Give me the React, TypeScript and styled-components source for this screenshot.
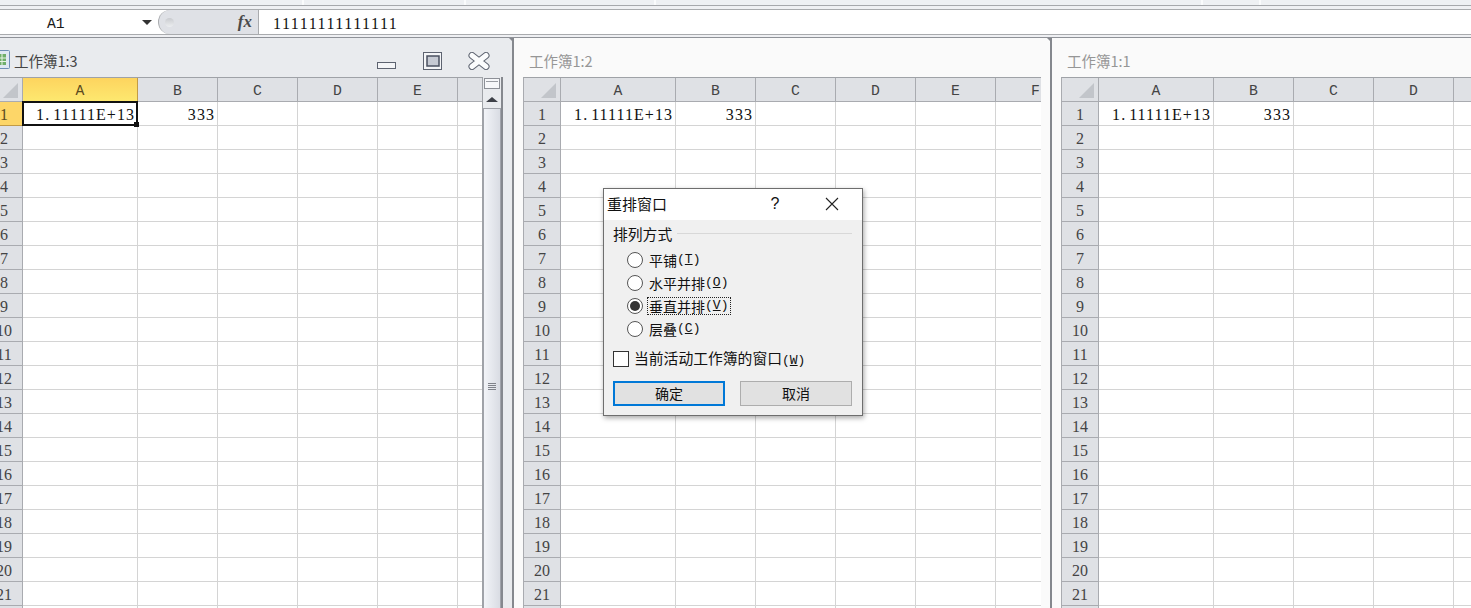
import React from "react";
import styled, { createGlobalStyle } from "styled-components";

const Global = createGlobalStyle`
  html, body { margin: 0; padding: 0; background: #fff; overflow: hidden; }
  * { box-sizing: border-box; }
`;

const CJK = `"Noto Sans CJK SC", "Liberation Sans", sans-serif`;
const MONO = `"Liberation Mono", "Noto Sans CJK SC", monospace`;
const SERIF = `"Liberation Serif", "Noto Sans CJK SC", serif`;

const Page = styled.div`
  position: relative;
  width: 1471px;
  height: 608px;
  overflow: hidden;
  display: flex;
  flex-direction: column;
  background: #eff0f3;
`;

const RibbonEdge = styled.div`
  display: flex;
  flex: none;
  height: 6px;
  background: #eef0f3;
  border-bottom: 1px solid #a6a8ac;
`;

const RibbonGroup = styled.div<{ $w: number }>`
  flex: none;
  width: ${(p) => p.$w}px;
  border-right: 2px solid #fafbfc;
`;

const RibbonGap = styled.div`
  flex: none;
  height: 3px;
  background: #eff0f3;
`;

const FormulaBar = styled.div`
  flex: none;
  display: flex;
  height: 26px;
  background: #fff;
  border-top: 1px solid #a9abae;
  border-bottom: 1px solid #a9abae;
`;

const NameBox = styled.div`
  flex: none;
  width: 158px;
  display: flex;
  align-items: center;
  padding: 3px 0 0 47px;
  font: 14.75px ${MONO};
  color: #1a1a1a;
`;

const NameArrow = styled.span`
  margin: -3px 0 0 77px;
  width: 0;
  height: 0;
  border-left: 5px solid transparent;
  border-right: 5px solid transparent;
  border-top: 5px solid #333;
`;

const FxPill = styled.div`
  flex: none;
  width: 101px;
  display: flex;
  align-items: center;
  justify-content: space-between;
  padding: 0 6px 0 6px;
  background: #dfe1e6;
  border-left: 1px solid #a9abae;
  border-right: 1px solid #a9abae;
  border-radius: 12px 0 0 12px;
`;

const PillDot = styled.span`
  width: 9px;
  height: 9px;
  border-radius: 50%;
  background: linear-gradient(#c9cbcf, #eceef0);
`;

const FxLabel = styled.span`
  font: italic bold 17px "Liberation Serif", serif;
  color: #4a4a4a;
`;

const FormulaText = styled.div`
  padding: 2px 0 0 14px;
  font: 16px/24px ${SERIF};
  letter-spacing: 1.5px;
  color: #111;
`;

const FrameGap = styled.div`
  flex: none;
  height: 3px;
  background: #eff0f3;
  border-bottom: 1px solid #8f9298;
`;

const Desktop = styled.div`
  flex: 1;
  display: flex;
  min-height: 0;
  margin-left: -25px;
`;

const Win = styled.section<{ $w?: number; $active?: boolean; $pad: number; $last?: boolean }>`
  position: relative;
  flex: ${(p) => (p.$w ? `none` : `1`)};
  width: ${(p) => (p.$w ? `${p.$w}px` : `auto`)};
  padding-left: ${(p) => p.$pad}px;
  display: flex;
  flex-direction: column;
  min-height: 0;
  background: ${(p) => (p.$active ? "#e9ebee" : "#fafafa")};
  border-right: ${(p) => (p.$last ? "0" : "2px solid #85888e")};

  &::after {
    content: "";
    display: ${(p) => (p.$last ? "none" : "block")};
    position: absolute;
    top: 0;
    right: -5px;
    width: 0;
    height: 0;
    border-left: 4px solid transparent;
    border-right: 4px solid transparent;
    border-top: 4px solid #85888e;
  }
`;

const TitleBar = styled.header<{ $active?: boolean }>`
  position: relative;
  flex: none;
  height: 39px;
  display: flex;
  align-items: center;
  padding: 5px 0 0 ${(p) => (p.$active ? "12px" : "6px")};
  gap: 4px;
  font: 14.5px ${CJK};
  color: ${(p) => (p.$active ? "#444" : "#969696")};
`;

const TitleButtons = styled.div`
  position: absolute;
  top: 14px;
  left: 392px;
  display: flex;
  gap: 26px;
  align-items: flex-end;
`;

const CloseGlyph = styled.svg`
  margin-left: -1px;
`;

const Body = styled.div`
  flex: 1;
  display: flex;
  min-height: 0;
`;

const Sheet = styled.div<{ $w?: number; $cols: number }>`
  flex: ${(p) => (p.$w ? "none" : "1")};
  width: ${(p) => (p.$w ? `${p.$w}px` : "auto")};
  height: 532px;
  overflow: hidden;
  display: grid;
  align-content: start;
  grid-template-columns: 37px 115px repeat(${(p) => p.$cols}, 80px);
  grid-auto-rows: 24px;
  background: #fff;
  border-left: 1px solid #a9abb0;
  border-top: 1px solid #9fa2a7;
  font: 16px ${SERIF};
  color: #111;
`;

const ColHead = styled.div<{ $on?: boolean }>`
  display: flex;
  align-items: center;
  justify-content: center;
  overflow: hidden;
  padding-top: 3px;
  font: 14.75px ${MONO};
  background: ${(p) => (p.$on ? "linear-gradient(#fdd45f, #fde86f)" : "#dfe1e5")};
  border-right: 1px solid ${(p) => (p.$on ? "#c29b46" : "#a9abb0")};
  border-bottom: 1px solid ${(p) => (p.$on ? "#c29b46" : "#a9abb0")};
  color: ${(p) => (p.$on ? "#5a4a20" : "#444")};
`;

const Corner = styled.div`
  display: flex;
  align-items: flex-end;
  justify-content: flex-end;
  padding: 0 4px 3px 0;
  background: #dfe1e5;
  border-right: 1px solid #a9abb0;
  border-bottom: 1px solid #a9abb0;
`;

const CornerMark = styled.span`
  width: 0;
  height: 0;
  border-left: 15px solid transparent;
  border-bottom: 15px solid #c2c5ca;
`;

const RowHead = styled.div<{ $on?: boolean }>`
  display: flex;
  align-items: center;
  justify-content: center;
  padding-top: 3px;
  background: ${(p) => (p.$on ? "#fdd668" : "#dfe1e5")};
  border-right: 1px solid ${(p) => (p.$on ? "#c29b46" : "#a9abb0")};
  border-bottom: 1px solid ${(p) => (p.$on ? "#c29b46" : "#a9abb0")};
  color: ${(p) => (p.$on ? "#5a4a20" : "#444")};
`;

const Cell = styled.div<{ $sel?: boolean }>`
  position: relative;
  display: flex;
  align-items: center;
  justify-content: flex-end;
  padding: 3px 2px 0 0;
  letter-spacing: 1.05px;
  border-right: 1px solid #d4d4d4;
  border-bottom: 1px solid #d4d4d4;
  white-space: nowrap;

  ${(p) =>
    p.$sel
      ? `
    &::before {
      content: "";
      position: absolute;
      left: -1px;
      top: -1px;
      right: -1px;
      bottom: -1px;
      border: 2px solid #111;
    }
    &::after {
      content: "";
      position: absolute;
      right: -2px;
      bottom: -2px;
      width: 5px;
      height: 5px;
      background: #111;
      z-index: 1;
    }
  `
      : ""}
`;

const WideDot = styled.span`
  display: inline-block;
  width: 8px;
`;

const ScrollBar = styled.div`
  flex: none;
  width: 21px;
  display: flex;
  flex-direction: column;
  background: #e9ebee;
  border-left: 1px solid #9fa2a7;
  border-right: 2px solid #85888e;
`;

const Splitter = styled.div`
  flex: none;
  height: 11px;
  margin: 1px 1px 0;
  background: #f7f8fa;
  border: 1px solid #8d9097;
  display: flex;
  justify-content: center;
  padding-top: 2px;

  &::before {
    content: "";
    width: 12px;
    height: 1px;
    background: #9a9da3;
  }
`;

const ScrollUp = styled.div`
  flex: none;
  height: 19px;
  display: flex;
  align-items: center;
  justify-content: center;
  padding-top: 1px;

  &::before {
    content: "";
    border-left: 6px solid transparent;
    border-right: 6px solid transparent;
    border-bottom: 5px solid #3e4148;
  }
`;

const Thumb = styled.div`
  flex: 1;
  display: flex;
  flex-direction: column;
  align-items: center;
  padding-top: 274px;
  gap: 1px;
  background: linear-gradient(90deg, #f2f4f8, #d9dce3);
  border: 1px solid #a0a3aa;
  border-bottom: 0;
`;

const Grip = styled.span`
  width: 8px;
  height: 1px;
  background: #80838a;
`;

const Dialog = styled.div`
  position: absolute;
  left: 603px;
  top: 188px;
  width: 260px;
  height: 228px;
  display: flex;
  flex-direction: column;
  background: #f0f0f0;
  border: 1px solid #6e6e6e;
  box-shadow: 1px 2px 5px rgba(0, 0, 0, 0.35);
  font: 14px ${CJK};
  color: #111;
`;

const DialogTitle = styled.div`
  flex: none;
  height: 31px;
  display: flex;
  align-items: center;
  padding: 0 0 2px 3px;
  background: #fff;
  font-size: 15px;
`;

const HelpMark = styled.span`
  margin-left: 101px;
  width: 14px;
  text-align: center;
  font: 16px "Liberation Sans", sans-serif;
`;

const CloseMark = styled.svg`
  margin-left: 43px;
  flex: none;
`;

const DialogBody = styled.div`
  flex: 1;
  display: flex;
  flex-direction: column;
  padding: 3px 10px 0 9px;
`;

const GroupHead = styled.div`
  display: flex;
  align-items: center;
  height: 20px;
  gap: 5px;
  font-size: 14.8px;

  &::after {
    content: "";
    flex: 1;
    height: 1px;
    background: #d8d8d8;
  }
`;

const RadioList = styled.div`
  display: flex;
  flex-direction: column;
  margin: 5px 0 0 14px;
`;

const RadioRow = styled.div`
  display: flex;
  align-items: center;
  height: 23px;
  gap: 3px;
`;

const RadioDot = styled.span<{ $on?: boolean }>`
  flex: none;
  width: 16px;
  height: 16px;
  border-radius: 50%;
  border: 1.5px solid #555;
  background: #fff;
  display: flex;
  align-items: center;
  justify-content: center;

  &::after {
    content: "";
    display: ${(p) => (p.$on ? "block" : "none")};
    width: 10px;
    height: 10px;
    border-radius: 50%;
    background: #333;
  }
`;

const OptionText = styled.span<{ $focus?: boolean }>`
  display: flex;
  align-items: center;
  height: 18px;
  padding: 0 2px 0 1px;
  margin-left: 1px;
  border: 1px ${(p) => (p.$focus ? "dotted #222" : "solid transparent")};
`;

const Key = styled.span`
  font: 13px ${MONO};
  white-space: nowrap;

  & u {
    text-underline-offset: 1px;
  }
`;

const CheckRow = styled.div`
  display: flex;
  align-items: center;
  height: 23px;
  gap: 5px;
  margin-top: 7px;
`;

const CheckBox = styled.span`
  flex: none;
  width: 16px;
  height: 16px;
  background: #fff;
  border: 1px solid #333;
`;

const CheckLabel = styled.span`
  font-size: 14.8px;
  line-height: 20px;
  margin-top: -2px;
`;

const ButtonRow = styled.div`
  display: flex;
  gap: 15px;
  margin-top: 11px;
`;

const DlgButton = styled.div<{ $primary?: boolean }>`
  width: 112px;
  height: 25px;
  display: flex;
  align-items: center;
  justify-content: center;
  padding-bottom: 2px;
  background: #e1e1e1;
  border: ${(p) => (p.$primary ? "2px solid #0078d7" : "1px solid #adadad")};
`;

const COL_LETTERS = ["A", "B", "C", "D", "E", "F", "G"];
const ROWS = Array.from({ length: 22 }, (_, i) => i + 1);

function cellValue(r: number, i: number) {
  if (r === 1 && i === 0)
    return (
      <span>
        1<WideDot>.</WideDot>11111E+13
      </span>
    );
  if (r === 1 && i === 1) return "333";
  return "";
}

function Grid({ width, cols, active }: { width?: number; cols: number; active?: boolean }) {
  const letters = COL_LETTERS.slice(0, cols + 1);
  return (
    <Sheet $w={width} $cols={cols}>
      <Corner>
        <CornerMark />
      </Corner>
      {letters.map((l, i) => (
        <ColHead key={l} $on={active && i === 0}>
          {l}
        </ColHead>
      ))}
      {ROWS.map((r) => (
        <React.Fragment key={r}>
          <RowHead $on={active && r === 1}>{r}</RowHead>
          {letters.map((l, i) => (
            <Cell key={l} $sel={active && r === 1 && i === 0}>
              {cellValue(r, i)}
            </Cell>
          ))}
        </React.Fragment>
      ))}
    </Sheet>
  );
}

function BookIcon() {
  return (
    <svg width="13" height="20" viewBox="0 0 13 20">
      <rect x="0.5" y="0.5" width="12" height="18" rx="1" fill="#dfe8f3" stroke="#6f8fb5" />
      <rect x="1" y="4" width="8" height="11" fill="#6fae6b" />
      <path d="M1 8h8M1 11.5h8M5 4v11" stroke="#e8f3e6" />
    </svg>
  );
}

const Options = [
  { t: "平铺", k: "T" },
  { t: "水平并排", k: "O" },
  { t: "垂直并排", k: "V", on: true },
  { t: "层叠", k: "C" },
];

export default function App() {
  return (
    <Page>
      <Global />
      <RibbonEdge>
        <RibbonGroup $w={304} />
        <RibbonGroup $w={162} />
        <RibbonGroup $w={190} />
        <RibbonGroup $w={547} />
        <RibbonGroup $w={58} />
      </RibbonEdge>
      <RibbonGap />
      <FormulaBar>
        <NameBox>
          A1
          <NameArrow />
        </NameBox>
        <FxPill>
          <PillDot />
          <FxLabel>fx</FxLabel>
        </FxPill>
        <FormulaText>11111111111111</FormulaText>
      </FormulaBar>
      <FrameGap />
      <Desktop>
        <Win $w={539} $active $pad={10}>
          <TitleBar $active>
            <BookIcon />
            工作簿1:3
            <TitleButtons>
              <svg width="20" height="8" viewBox="0 0 20 8">
                <rect x="0.5" y="0.5" width="18" height="6" fill="#f4f5f7" stroke="#5d6370" />
              </svg>
              <svg width="20" height="18" viewBox="0 0 20 18">
                <rect x="0.5" y="0.5" width="18" height="17" fill="#f4f5f7" stroke="#5d6370" />
                <rect x="4" y="4" width="12" height="10" fill="#c6cad3" stroke="#4a5060" strokeWidth="1.5" />
              </svg>
              <CloseGlyph width="22" height="18" viewBox="0 0 22 18">
                <path d="M4 3.5L18 14.5M18 3.5L4 14.5" stroke="#5d6370" strokeWidth="7" strokeLinecap="round" />
                <path d="M4 3.5L18 14.5M18 3.5L4 14.5" stroke="#fbfcfd" strokeWidth="5" strokeLinecap="round" />
              </CloseGlyph>
            </TitleButtons>
          </TitleBar>
          <Body>
            <Grid width={497} cols={5} active />
            <ScrollBar>
              <Splitter />
              <ScrollUp />
              <Thumb>
                <Grip />
                <Grip />
                <Grip />
                <Grip />
              </Thumb>
            </ScrollBar>
          </Body>
        </Win>
        <Win $w={538} $pad={9}>
          <TitleBar>工作簿1:2</TitleBar>
          <Body>
            <Grid width={518} cols={5} />
          </Body>
        </Win>
        <Win $pad={9} $last>
          <TitleBar>工作簿1:1</TitleBar>
          <Body>
            <Grid cols={5} />
          </Body>
        </Win>
      </Desktop>
      <Dialog>
        <DialogTitle>
          重排窗口
          <HelpMark>?</HelpMark>
          <CloseMark width="14" height="14" viewBox="0 0 14 14">
            <path d="M1 1L13 13M13 1L1 13" stroke="#222" strokeWidth="1.1" fill="none" />
          </CloseMark>
        </DialogTitle>
        <DialogBody>
          <GroupHead>排列方式</GroupHead>
          <RadioList>
            {Options.map((o) => (
              <RadioRow key={o.k}>
                <RadioDot $on={o.on} />
                <OptionText $focus={o.on}>
                  {o.t}
                  <Key>
                    (<u>{o.k}</u>)
                  </Key>
                </OptionText>
              </RadioRow>
            ))}
          </RadioList>
          <CheckRow>
            <CheckBox />
            <CheckLabel>
              当前活动工作簿的窗口
              <Key>
                (<u>W</u>)
              </Key>
            </CheckLabel>
          </CheckRow>
          <ButtonRow>
            <DlgButton $primary>确定</DlgButton>
            <DlgButton>取消</DlgButton>
          </ButtonRow>
        </DialogBody>
      </Dialog>
    </Page>
  );
}
